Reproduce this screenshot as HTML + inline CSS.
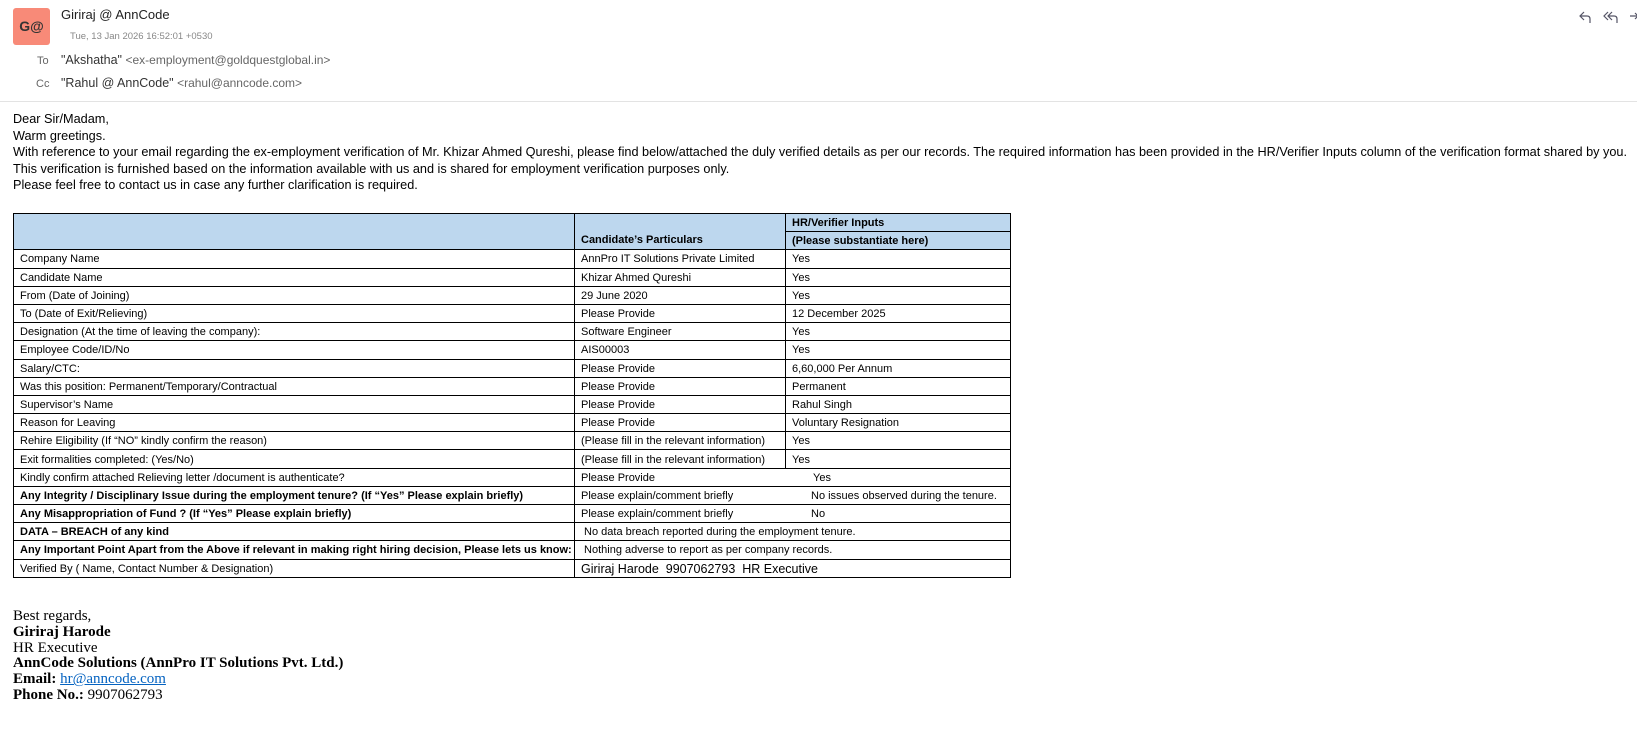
<!DOCTYPE html>
<html><head><meta charset="utf-8"><style>
body{margin:0;width:1637px;height:751px;background:#fff;font-family:"Liberation Sans",sans-serif;color:#000;position:relative;overflow:hidden}
.abs{position:absolute;white-space:nowrap}
.av{left:13px;top:8px;width:37px;height:37px;background:#f88a78;border-radius:3px;font-size:14px;font-weight:bold;color:#333;text-align:center;line-height:37px}
.g{color:#666}
.body{left:13px;top:111px;font-size:12.7px;line-height:16.6px}
table{position:absolute;left:13px;top:213px;border-collapse:collapse;font-size:11px;table-layout:fixed;width:997px}
td{border:1px solid #000;padding:2px 0 0 6px;height:15.2px;white-space:nowrap;overflow:hidden;line-height:13px;vertical-align:middle}
.h td{background:#bdd7ee;font-weight:bold}
b{font-weight:bold}
.sig{left:13px;top:609px;font-family:"Liberation Serif",serif;font-size:15px;line-height:15.8px}
.sig a{color:#0563c1;text-decoration:underline}
</style></head><body>
<div class="abs av">G@</div>
<div class="abs" style="left:61px;top:7px;font-size:13px;color:#222">Giriraj @ AnnCode</div>
<div class="abs g" style="left:70px;top:31px;font-size:9.5px;color:#888">Tue, 13 Jan 2026 16:52:01 +0530</div>
<div class="abs g" style="left:37px;top:55px;font-size:11px">To</div>
<div class="abs" style="left:61px;top:53px;font-size:12.5px;color:#333">"Akshatha" <span class="g" style="font-size:12px">&lt;ex-employment@goldquestglobal.in&gt;</span></div>
<div class="abs g" style="left:36px;top:78px;font-size:11px">Cc</div>
<div class="abs" style="left:61px;top:76px;font-size:12.5px;color:#333">"Rahul @ AnnCode" <span class="g" style="font-size:12px">&lt;rahul@anncode.com&gt;</span></div>
<svg class="abs" style="left:1578px;top:9px" width="60" height="16" viewBox="0 0 60 16" fill="none" stroke="#556" stroke-width="1.2"><path d="M6 3 L2 7 L6 11 M2 7 H9 Q12 7 12 10 V14"/><path d="M30 3 L26 7 L30 11 M34 3 L30 7 L34 11 M30 7 H36 Q39 7 39 10 V14"/><path d="M52 7 H60 M57 4 L60 7 L57 10"/></svg>
<div class="abs" style="left:0;top:101px;width:1637px;height:1px;background:#e3e3e3"></div>
<div class="abs body">Dear Sir/Madam,<br>Warm greetings.<br>With reference to your email regarding the ex-employment verification of Mr. Khizar Ahmed Qureshi, please find below/attached the duly verified details as per our records. The required information has been provided in the HR/Verifier Inputs column of the verification format shared by you.<br>This verification is furnished based on the information available with us and is shared for employment verification purposes only.<br>Please feel free to contact us in case any further clarification is required.</div>
<table>
<colgroup><col style="width:561px"><col style="width:211px"><col style="width:225px"></colgroup>
<tr class="h"><td rowspan="2" style="height:32px"></td><td rowspan="2" style="vertical-align:bottom;padding-bottom:2px">Candidate’s Particulars</td><td>HR/Verifier Inputs</td></tr>
<tr class="h"><td>(Please substantiate here)</td></tr>
<tr><td>Company Name</td><td>AnnPro IT Solutions Private Limited</td><td>Yes</td></tr>
<tr><td>Candidate Name</td><td>Khizar Ahmed Qureshi</td><td>Yes</td></tr>
<tr><td>From (Date of Joining)</td><td>29 June 2020</td><td>Yes</td></tr>
<tr><td>To (Date of Exit/Relieving)</td><td>Please Provide</td><td>12 December 2025</td></tr>
<tr><td>Designation (At the time of leaving the company):</td><td>Software Engineer</td><td>Yes</td></tr>
<tr><td>Employee Code/ID/No</td><td>AIS00003</td><td>Yes</td></tr>
<tr><td>Salary/CTC:</td><td>Please Provide</td><td>6,60,000 Per Annum</td></tr>
<tr><td>Was this position: Permanent/Temporary/Contractual</td><td>Please Provide</td><td>Permanent</td></tr>
<tr><td>Supervisor’s Name</td><td>Please Provide</td><td>Rahul Singh</td></tr>
<tr><td>Reason for Leaving</td><td>Please Provide</td><td>Voluntary Resignation</td></tr>
<tr><td>Rehire Eligibility (If “NO” kindly confirm the reason)</td><td>(Please fill in the relevant information)</td><td>Yes</td></tr>
<tr><td>Exit formalities completed: (Yes/No)</td><td>(Please fill in the relevant information)</td><td>Yes</td></tr>
<tr><td>Kindly confirm attached Relieving letter /document is authenticate?</td><td colspan="2"><span style="display:inline-block;width:232px">Please Provide</span>Yes</td></tr>
<tr><td><b>Any Integrity / Disciplinary Issue during the employment tenure? (If “Yes” Please explain briefly)</b></td><td colspan="2"><span style="display:inline-block;width:230px">Please explain/comment briefly</span>No issues observed during the tenure.</td></tr>
<tr><td><b>Any Misappropriation of Fund ? (If “Yes” Please explain briefly)</b></td><td colspan="2"><span style="display:inline-block;width:230px">Please explain/comment briefly</span>No</td></tr>
<tr><td><b>DATA – BREACH of any kind</b></td><td colspan="2">&nbsp;No data breach reported during the employment tenure.</td></tr>
<tr><td><b>Any Important Point Apart from the Above if relevant in making right hiring decision, Please lets us know:</b></td><td colspan="2">&nbsp;Nothing adverse to report as per company records.</td></tr>
<tr><td>Verified By ( Name, Contact Number &amp; Designation)</td><td colspan="2" style="font-size:12.5px">Giriraj Harode&nbsp; 9907062793&nbsp; HR Executive</td></tr>
</table>
<div class="abs sig">Best regards,<br><b>Giriraj Harode</b><br>HR Executive<br><b>AnnCode Solutions (AnnPro IT Solutions Pvt. Ltd.)</b><br><b>Email:</b> <a>hr@anncode.com</a><br><b>Phone No.:</b> 9907062793</div>
</body></html>
